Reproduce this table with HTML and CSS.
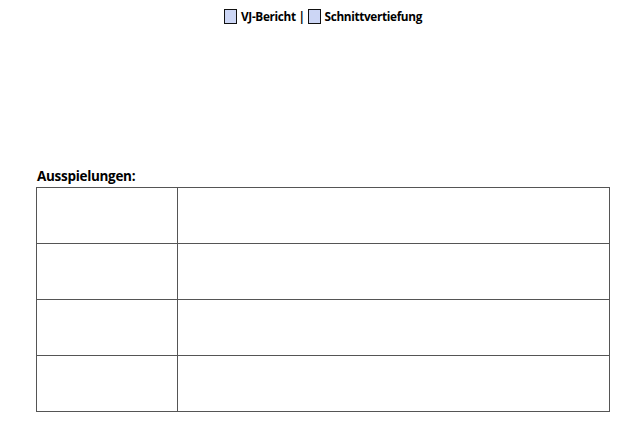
FILE: index.html
```html
<!DOCTYPE html>
<html>
<head>
<meta charset="utf-8">
<link rel="stylesheet" href="styles.css">
</head>
<body>
<div class="page">
  <div class="header">
    <span class="box"></span><span class="label">VJ-Bericht |</span>
    <span class="box"></span><span class="label">Schnittvertiefung</span>
  </div>
  <div class="title">Ausspielungen:</div>
  <table class="grid">
    <tr><td class="c1"></td><td></td></tr>
    <tr><td class="c1"></td><td></td></tr>
    <tr><td class="c1"></td><td></td></tr>
    <tr><td class="c1"></td><td></td></tr>
  </table>
</div>
</body>
</html>
```

FILE: styles.css
```css
html, body { margin: 0; padding: 0; background: #fff; }
body { font-family: "Open Sans", "Noto Sans", sans-serif; color: #000; }
.page { width: 629px; height: 424px; position: relative; }
.header {
  display: flex; align-items: center; justify-content: center;
  padding-top: 8px; padding-left: 20px; height: 16px;
  font-weight: 700; font-size: 11.8px; letter-spacing: -0.35px;
}
.box {
  width: 11px; height: 13px; border: 1px solid #111;
  background: #ccd6f5; display: inline-block; margin-right: 4px;
}
.label { margin-right: 3px; }
.title {
  margin: 142px 0 0 37px; font-weight: 700; font-size: 13.5px; letter-spacing: -0.3px;
  height: 21px; line-height: 20px;
}
.grid {
  margin-left: 36px; border-collapse: collapse; width: 574px;
}
.grid td { border: 1px solid #555; height: 55px; padding: 0; }
.grid td.c1 { width: 140px; }
```
